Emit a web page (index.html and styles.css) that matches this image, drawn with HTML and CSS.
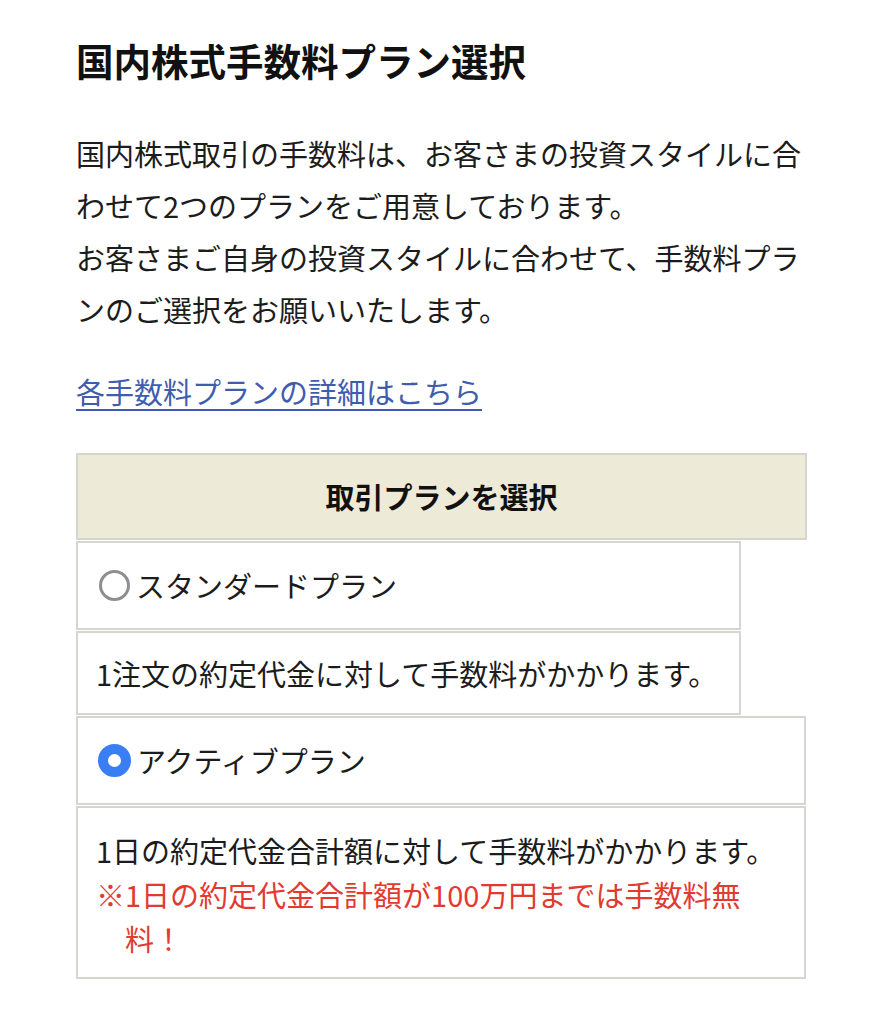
FILE: index.html
```html
<!DOCTYPE html>
<html lang="ja">
<head>
<meta charset="utf-8">
<title>国内株式手数料プラン選択</title>
<link rel="stylesheet" href="styles.css">
</head>
<body>
<main class="page">
  <h1 class="title">国内株式手数料プラン選択</h1>
  <p class="lead">国内株式取引の手数料は、お客さまの投資スタイルに合わせて2つのプランをご用意しております。<br>お客さまご自身の投資スタイルに合わせて、手数料プランのご選択をお願いいたします。</p>
  <p class="more"><a class="more-link" href="#">各手数料プランの詳細はこちら</a></p>
  <section class="plans">
    <div class="plans-head">取引プランを選択</div>
    <label class="plan-row narrow">
      <span class="radio"></span>
      <span class="plan-name">スタンダードプラン</span>
    </label>
    <div class="plan-desc narrow">1注文の約定代金に対して手数料がかかります。</div>
    <label class="plan-row">
      <span class="radio checked"></span>
      <span class="plan-name">アクティブプラン</span>
    </label>
    <div class="plan-desc tall">
      <div>1日の約定代金合計額に対して手数料がかかります。</div>
      <div class="note">※1日の約定代金合計額が100万円までは手数料無料！</div>
    </div>
  </section>
</main>
</body>
</html>
```

FILE: styles.css
```css
html, body {
  margin: 0;
  padding: 0;
  background: #ffffff;
}

body {
  font-family: "Noto Sans CJK JP", "Noto Sans", sans-serif;
  color: #1c1c1c;
}

.page {
  padding: 34px 76px 40px;
}

.title {
  margin: 0;
  font-size: 37.5px;
  line-height: 52px;
  font-weight: 700;
  color: #111;
}

.lead {
  margin: 41px 0 0;
  font-size: 29px;
  line-height: 52px;
}

.more {
  margin: 30px 0 0;
  font-size: 29px;
  line-height: 52px;
}

.more-link {
  color: #3e5dae;
  text-decoration: underline;
  text-decoration-thickness: 2px;
  text-underline-offset: 5px;
}

.plans {
  margin-top: 36px;
  display: flex;
  flex-direction: column;
  gap: 1px;
  font-size: 29px;
}

.plans-head {
  width: 731px;
  box-sizing: border-box;
  border: 2px solid #d5d5cd;
  background: #eeead8;
  padding: 19px 0;
  line-height: 45px;
  text-align: center;
  font-weight: 700;
  color: #111;
}

.plan-row {
  width: 730px;
  box-sizing: border-box;
  border: 2px solid #d6d6d0;
  padding: 20px 18px 20px 21px;
  line-height: 45px;
  display: flex;
  align-items: center;
  gap: 6px;
}

.plan-desc {
  width: 730px;
  box-sizing: border-box;
  border: 2px solid #d6d6d0;
  padding: 18px 18px;
  line-height: 44px;
}

.narrow {
  width: 665px;
}

.tall {
  padding: 20px 18px 17px;
}

.note {
  color: #e23a2f;
  max-width: 660px;
  padding-left: 29px;
  text-indent: -29px;
}

.radio {
  width: 31px;
  height: 31px;
  box-sizing: border-box;
  border-radius: 50%;
  border: 3px solid #8e8e8e;
  flex: none;
}

.radio.checked {
  width: 33px;
  height: 33px;
  border: 10px solid #3a7ef3;
  background: #ffffff;
  margin-left: -1px;
}

.plan-name {
  color: #1c1c1c;
}
```
